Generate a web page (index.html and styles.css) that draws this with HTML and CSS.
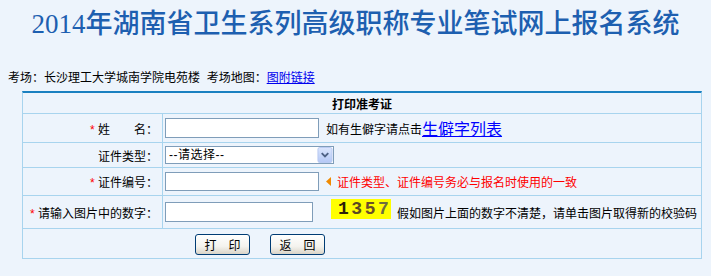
FILE: index.html
```html
<!DOCTYPE html>
<html lang="zh-CN">
<head>
<meta charset="utf-8">
<title>2014年湖南省卫生系列高级职称专业笔试网上报名系统</title>
<link rel="stylesheet" href="styles.css">
</head>
<body>
<h1 class="title">2014年湖南省卫生系列高级职称专业笔试网上报名系统</h1>
<p class="exam-info">考场：长沙理工大学城南学院电苑楼&nbsp; 考场地图：<a href="#">图附链接</a></p>
<form class="print-form">
<table class="form-table">
  <tr class="row-head"><th colspan="2">打印准考证</th></tr>
  <tr class="row-name">
    <td class="label"><span class="req">*</span> 姓　　名：</td>
    <td class="field"><input class="txt txt-name" type="text"><span class="hint">如有生僻字请点击</span><a class="rare-link" href="#">生僻字列表</a></td>
  </tr>
  <tr class="row-type">
    <td class="label">证件类型：</td>
    <td class="field">
      <span class="select-wrap">
        <select class="sel"><option>--请选择--</option></select>
        <svg class="sel-btn" width="16" height="17" viewBox="0 0 16 17" aria-hidden="true">
          <defs><linearGradient id="g" x1="0" y1="0" x2="0" y2="1"><stop offset="0" stop-color="#dbe6fd"/><stop offset="1" stop-color="#b4c8f6"/></linearGradient></defs>
          <rect x="0.5" y="0.5" width="15" height="16" rx="2" fill="url(#g)" stroke="#b6c9f1"/>
          <path d="M4.5 6.5 L8 10 L11.5 6.5" fill="none" stroke="#4d6185" stroke-width="2"/>
        </svg>
      </span>
    </td>
  </tr>
  <tr class="row-id">
    <td class="label"><span class="req">*</span> 证件编号：</td>
    <td class="field"><input class="txt txt-id" type="text"><svg class="warn-arrow" width="5" height="9" viewBox="0 0 5 9" aria-hidden="true"><path d="M5 0 L0 4.5 L5 9 Z" fill="#f08a00"/></svg><span class="warn">证件类型、证件编号务必与报名时使用的一致</span></td>
  </tr>
  <tr class="row-code">
    <td class="label"><span class="req">*</span> 请输入图片中的数字：</td>
    <td class="field"><input class="txt txt-code" type="text"><span class="captcha"><span class="d1">1</span><span class="d2">3</span><span class="d3">5</span><span class="d4">7</span></span><span class="code-tip">假如图片上面的数字不清楚，请单击图片取得新的校验码</span></td>
  </tr>
  <tr class="row-btns">
    <td colspan="2" class="btns"><button type="button" class="btn">打　印</button><button type="button" class="btn">返　回</button></td>
  </tr>
</table>
</form>
</body>
</html>
```
FILE: styles.css
```css
* { box-sizing: border-box; }

body {
  margin: 0;
  background: #edf4fc;
  font-family: "Liberation Sans", "Noto Sans CJK SC", sans-serif;
  font-size: 12px;
  color: #000;
}

.title {
  margin: 0;
  padding-top: 6px;
  height: 42px;
  line-height: 36px;
  text-align: center;
  font-family: "Liberation Serif", "Noto Sans CJK SC", serif;
  font-size: 27px;
  font-weight: 500;
  letter-spacing: 0;
  color: #1d5fb0;
}

.exam-info {
  margin: 28px 0 0 8px;
  line-height: 16px;
}

.exam-info a { color: #0000ee; }

.print-form { margin: 0; }

.form-table {
  margin: 5px 0 0 22px;
  width: 680px;
  border-collapse: separate;
  border-spacing: 0;
  border-top: 2px solid #1a80c0;
  border-left: 1px solid #a8d4ee;
  border-right: 1px solid #a8d4ee;
}

.form-table th,
.form-table td {
  padding: 0;
  border-bottom: 1px solid #a8d4ee;
  vertical-align: middle;
  white-space: nowrap;
}

.form-table th {
  font-weight: bold;
  text-align: center;
}

.row-head th { height: 21px; }
.row-name td { height: 29px; }
.row-type td { height: 25px; }
.row-id td { height: 28px; }
.row-code td { height: 33px; }
.row-btns td { height: 30px; }

.label {
  width: 140px;
  text-align: right;
  padding-right: 4px !important;
  border-right: 1px solid #a8d4ee;
}

.req { color: #ff0000; }

.field { padding-left: 2px !important; }

.txt {
  margin: 0;
  padding: 0 2px;
  border: 1px solid #7f9db9;
  background: #fff;
  font: inherit;
  vertical-align: middle;
}

.txt-name { width: 154px; height: 20px; }
.txt-id { width: 154px; height: 19px; }
.txt-code { width: 148px; height: 20px; }

.hint { margin-left: 7px; vertical-align: middle; }

.rare-link {
  font-size: 16px;
  color: #0000ff;
  vertical-align: middle;
}

.select-wrap {
  position: relative;
  display: inline-block;
  vertical-align: middle;
  height: 18px;
}

.sel {
  appearance: none;
  -webkit-appearance: none;
  display: block;
  width: 169px;
  height: 18px;
  margin: 0;
  padding: 0 0 0 3px;
  border: 1px solid #7f9db9;
  border-radius: 0;
  background: #fff;
  font: inherit;
  letter-spacing: 0.5px;
  color: #000;
}

.sel-btn {
  position: absolute;
  right: 1px;
  top: 1px;
  width: 16px;
  height: 16px;
}

.warn-arrow {
  margin-left: 7px;
  vertical-align: middle;
}

.warn {
  margin-left: 6px;
  color: #ff0000;
  vertical-align: middle;
}

.captcha {
  display: inline-block;
  margin-left: 18px;
  width: 60px;
  height: 20px;
  padding-left: 7px;
  background: #ffff00;
  font-family: "Liberation Mono", monospace;
  font-weight: bold;
  font-size: 18px;
  line-height: 20px;
  letter-spacing: 2.5px;
  vertical-align: middle;
  position: relative;
  top: -3px;
}

.d1 { color: #2e1f0a; }
.d2 { color: #5b4a22; }
.d3 { color: #6b4e2a; }
.d4 { color: #6e6e40; }

.code-tip { margin-left: 6px; vertical-align: middle; }

.btns { padding-left: 172px !important; }

.btn {
  width: 55px;
  height: 21px;
  margin: 0 20px 0 0;
  padding: 0;
  border: 1px solid #003c74;
  border-radius: 3px;
  background: linear-gradient(#ffffff, #f4f3ee 60%, #d9d4c8);
  font: inherit;
  color: #000;
  vertical-align: middle;
  position: relative;
  top: 1px;
}
```
